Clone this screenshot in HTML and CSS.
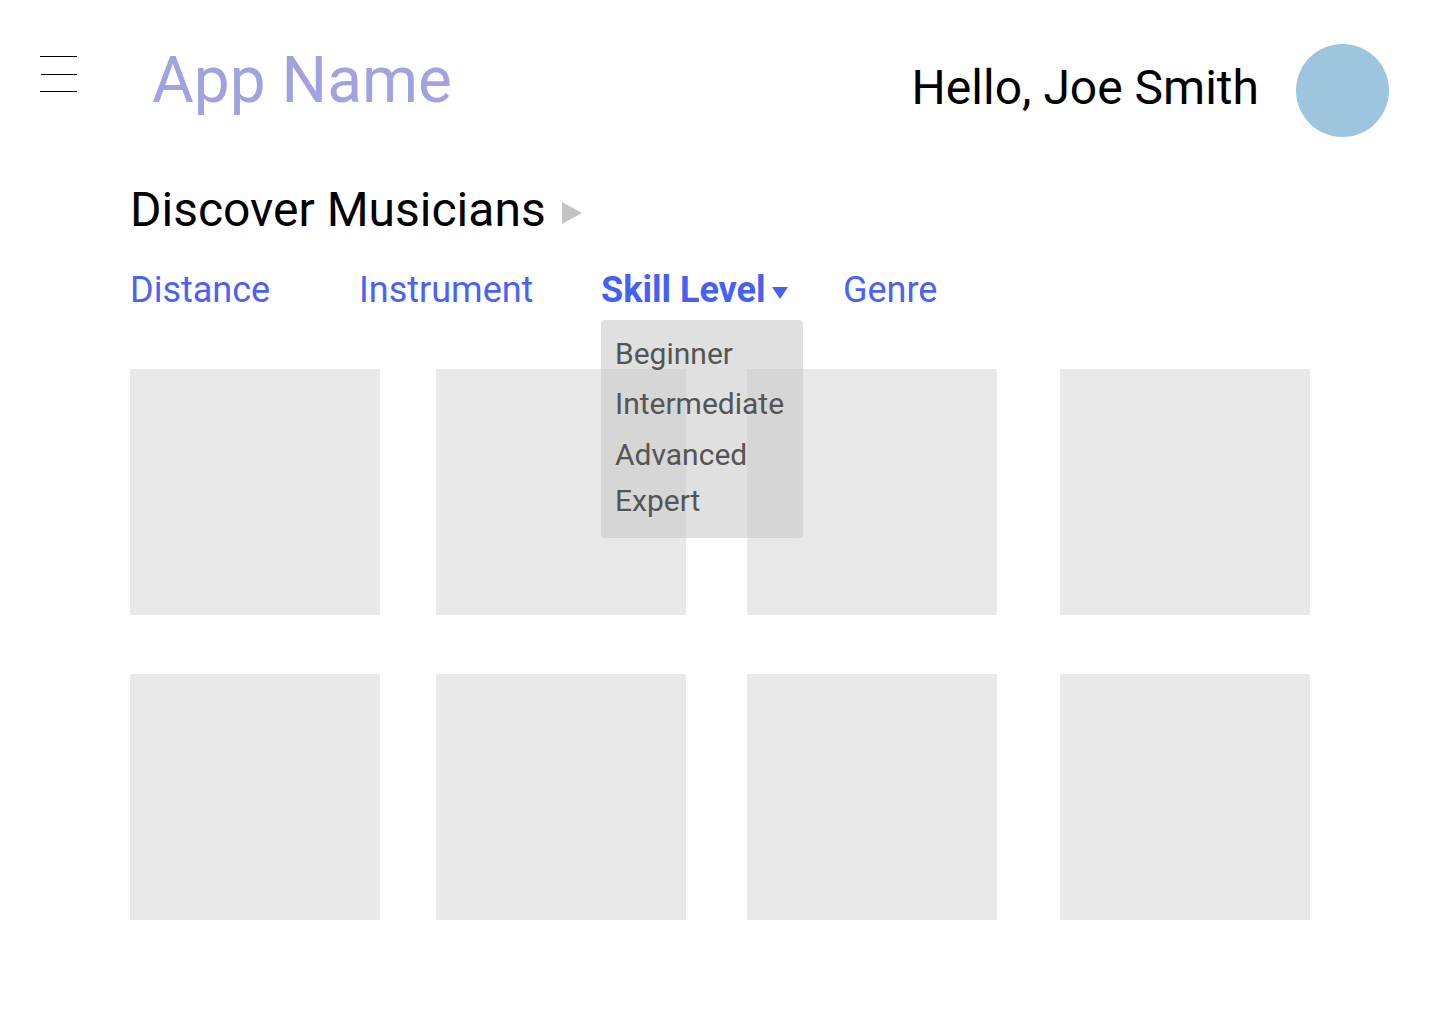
FILE: index.html
```html
<!DOCTYPE html>
<html lang="en">
<head>
<meta charset="utf-8">
<title>App Name</title>
<link rel="stylesheet" href="styles.css">
</head>
<body>
<header class="header">
  <button class="menu" aria-label="Menu">
    <span class="menu-line"></span>
    <span class="menu-line menu-line-mid"></span>
    <span class="menu-line"></span>
  </button>
  <div class="app-name">App Name</div>
  <div class="spacer"></div>
  <div class="greeting">Hello, Joe Smith</div>
  <div class="avatar"></div>
</header>
<main class="content">
  <h1 class="title">Discover Musicians <span class="title-arrow"></span></h1>
  <nav class="filters">
    <span class="filter">Distance</span>
    <span class="filter">Instrument</span>
    <span class="filter filter-active">Skill Level<span class="caret"></span>
      <ul class="dropdown">
        <li>Beginner</li>
        <li>Intermediate</li>
        <li class="adv">Advanced</li>
        <li class="last">Expert</li>
      </ul>
    </span>
    <span class="filter">Genre</span>
  </nav>
  <section class="grid">
    <div class="tile"></div>
    <div class="tile"></div>
    <div class="tile"></div>
    <div class="tile"></div>
    <div class="tile"></div>
    <div class="tile"></div>
    <div class="tile"></div>
    <div class="tile"></div>
  </section>
</main>
</body>
</html>
```
FILE: styles.css
```css
* { box-sizing: border-box; }
html, body { margin: 0; padding: 0; }
body {
  width: 1440px;
  height: 1024px;
  background: #ffffff;
  font-family: Roboto, "Liberation Sans", sans-serif;
  color: #000;
  overflow: hidden;
}
.header {
  display: flex;
  align-items: flex-start;
  padding: 0 51px 0 40px;
}
.menu {
  margin-top: 56px;
  width: 37px;
  height: 36px;
  padding: 0;
  border: 0;
  background: none;
  display: flex;
  flex-direction: column;
  justify-content: space-between;
  align-items: flex-end;
}
.menu-line {
  display: block;
  width: 37px;
  height: 1px;
  background: #000;
}
.menu-line-mid { width: 36px; }
.app-name {
  margin-left: 75px;
  margin-top: 49px;
  font-size: 64px;
  line-height: 64px;
  color: #a0a3e0;
}
.spacer { flex: 1; }
.greeting {
  margin-top: 64px;
  font-size: 48px;
  line-height: 48px;
  color: #000;
}
.avatar {
  margin-top: 44px;
  margin-left: 37px;
  width: 93px;
  height: 93px;
  border-radius: 50%;
  background: #9dc5dd;
}
.content {
  padding: 0 0 0 130px;
}
.title {
  margin: 0;
  margin-top: 49px;
  font-size: 48px;
  line-height: 48px;
  font-weight: 400;
  display: flex;
  align-items: center;
}
.title-arrow {
  display: inline-block;
  margin-left: 16px;
  margin-top: 6px;
  width: 0;
  height: 0;
  border-top: 11px solid transparent;
  border-bottom: 11px solid transparent;
  border-left: 20px solid #c4c4c4;
}
.filters {
  margin-top: 38px;
  display: grid;
  grid-template-columns: 229px 242px 242px auto;
  font-size: 36px;
  line-height: 36px;
  color: #4a62f8;
}
.filter { position: relative; }
.filter-active {
  font-weight: 700;
  color: #4460f6;
  display: flex;
  align-items: center;
}
.caret {
  display: inline-block;
  margin-left: 6px;
  margin-top: 6px;
  width: 0;
  height: 0;
  border-left: 8px solid transparent;
  border-right: 8px solid transparent;
  border-top: 12px solid #4460f6;
}
.dropdown {
  position: absolute;
  left: 0;
  top: 48px;
  width: 202px;
  height: 218px;
  margin: 0;
  padding: 9px 0 0 14px;
  list-style: none;
  border-radius: 4px;
  background: rgba(200, 200, 200, 0.56);
  font-size: 30px;
  line-height: 50px;
  font-weight: 400;
  color: #555555;
  z-index: 2;
}
.dropdown .adv { margin-top: 1px; }
.dropdown .last { margin-top: -4px; }
.grid {
  margin-top: 61px;
  display: grid;
  grid-template-columns: 306px 311px 313px 250px;
  row-gap: 59px;
}
.tile {
  width: 250px;
  height: 246px;
  background: #e9e9e9;
}
```
